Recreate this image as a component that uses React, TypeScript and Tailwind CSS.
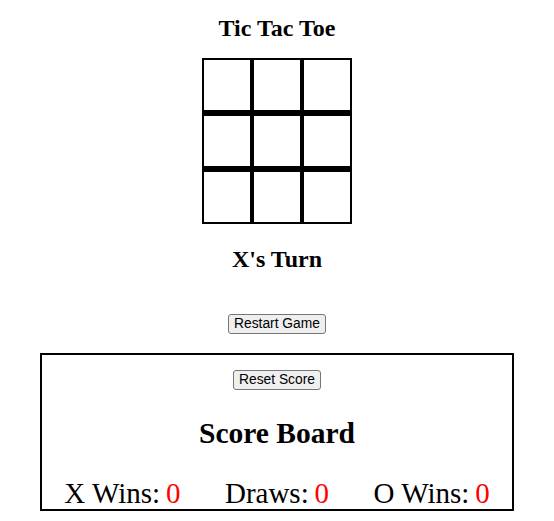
import { useState } from "react";

function Board() {
  const cells = Array(9).fill(null);

  return (
    <div className="grid grid-cols-[46px_46px_46px] grid-rows-[50px_50px_50px] gap-x-[4px] gap-y-[6px] bg-black p-[2px]">
      {cells.map((_, i) => (
        <div key={i} className="bg-white" />
      ))}
    </div>
  );
}

function App() {
  const [turn] = useState("X");
  const [score] = useState({ x: 0, draws: 0, o: 0 });

  const btn =
    "h-[20px] px-[5px] border border-[#767676] bg-[#efefef] rounded-[3px] text-[13.8px] leading-[16px] text-black font-['Liberation_Sans',Arial,sans-serif]";

  return (
    <div className="w-[554px] min-h-[521px] bg-white flex flex-col items-center font-['Liberation_Serif','Times_New_Roman',serif] text-black">
      <h2 className="mt-[14px] h-[28px] text-[24px] leading-[28px] font-bold">Tic Tac Toe</h2>

      <div className="mt-[16px]">
        <Board />
      </div>

      <h2 className="mt-[21px] h-[28px] text-[24px] leading-[28px] font-bold">{turn}'s Turn</h2>

      <button className={`mt-[41px] ${btn}`}>Restart Game</button>

      {/* score board */}
      <div className="mt-[19px] w-[474px] h-[158px] border-2 border-black flex flex-col items-center">
        <button className={`mt-[15px] ${btn}`}>Reset Score</button>
        <h1 className="mt-[26px] h-[34px] text-[29.5px] leading-[34px] font-bold">Score Board</h1>
        <div className="mt-[27px] w-full h-[32px] flex justify-around text-[29px] leading-[32px]">
          <div>
            X Wins:&#8201;<span className="text-[#ff0000]">{score.x}</span>
          </div>
          <div>
            Draws:&#8201;<span className="text-[#ff0000]">{score.draws}</span>
          </div>
          <div>
            O Wins:&#8201;<span className="text-[#ff0000]">{score.o}</span>
          </div>
        </div>
      </div>
    </div>
  );
}

export default App;
